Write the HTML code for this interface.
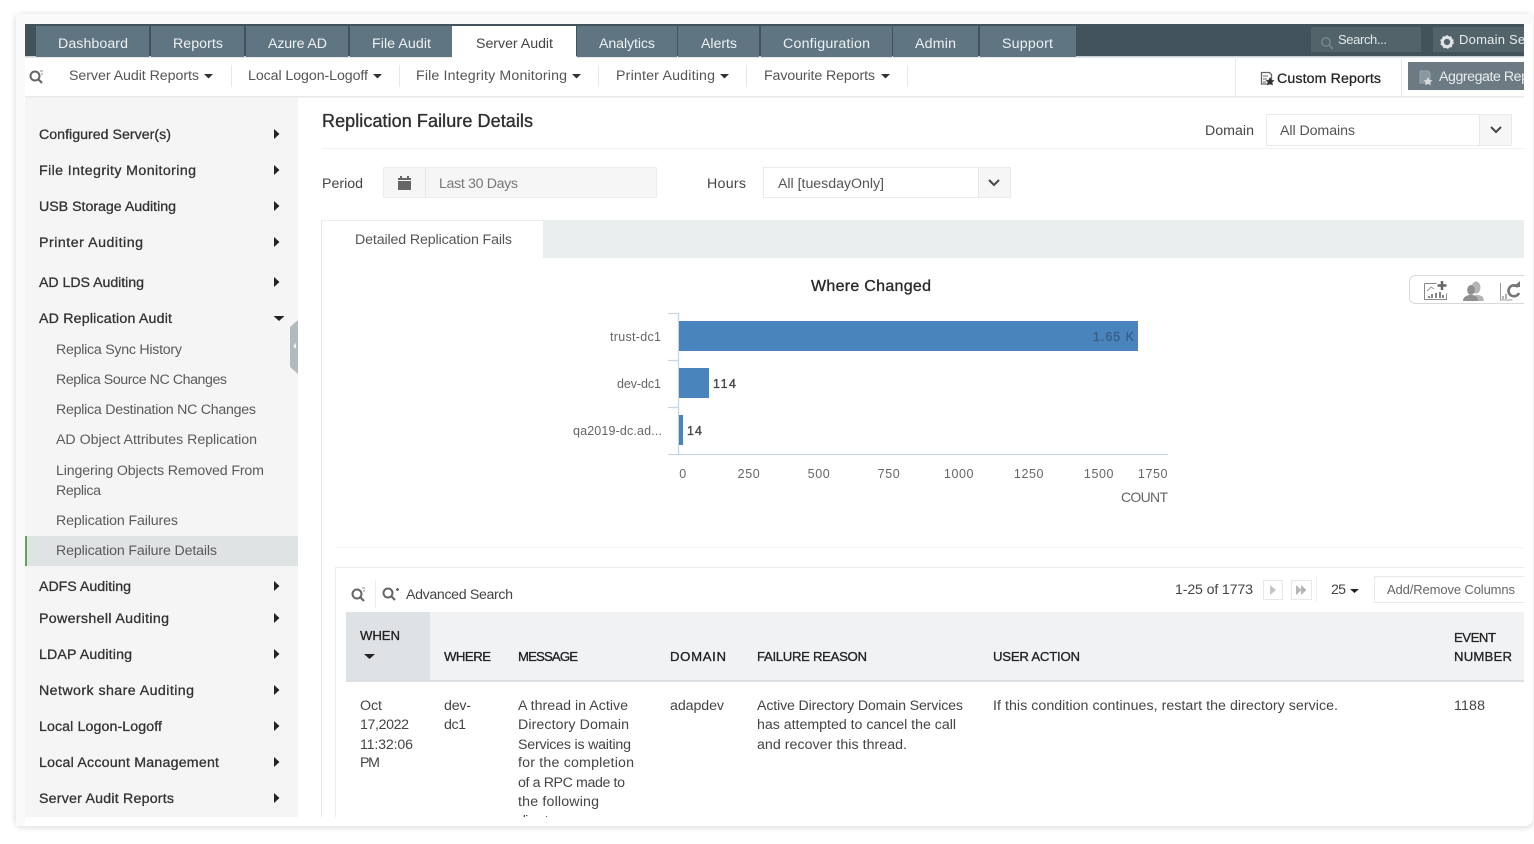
<!DOCTYPE html>
<html><head><meta charset="utf-8"><title>Replication Failure Details</title>
<style>
html,body{margin:0;padding:0;width:1534px;height:844px;overflow:hidden;background:#fff}
svg{display:block;position:absolute;left:0;top:0}
text{font-family:"Liberation Sans",sans-serif;font-size:14.2px;fill:#555}
.tab text{fill:#eef1f2}
.s{stroke:currentColor;stroke-width:.35px}
.b text{fill:#333;stroke:#333;stroke-width:.3px}
.u text{fill:#5a5a5a}
.h text{fill:#222;stroke:#222;stroke-width:.3px;font-size:13.2px}
.r text{fill:#444}
.c text{fill:#666;font-size:12.5px;letter-spacing:.6px}
.l text{fill:#666;font-size:12.5px}
</style></head><body>
<svg width="1534" height="844" viewBox="0 0 1534 844" xmlns="http://www.w3.org/2000/svg">
<defs>
<clipPath id="app"><rect x="25" y="24" width="1499" height="793"/></clipPath>
<filter id="sh" x="-2%" y="-3%" width="104%" height="106%"><feGaussianBlur stdDeviation="2.500"/></filter>
<filter id="soft" x="0" y="0" width="100%" height="100%"><feGaussianBlur stdDeviation="0.35"/></filter>
</defs>
<rect x="14" y="13" width="1520" height="816" rx="9" fill="#e6e6e6" filter="url(#sh)"/>
<rect x="16" y="14" width="1517" height="812" rx="8" fill="#fff"/>
<rect x="16" y="14" width="9" height="812" fill="#fafafa"/>
<rect x="16" y="14" width="1517" height="10" rx="4" fill="#fafafa"/>
<g clip-path="url(#app)" filter="url(#soft)">
<!-- top bar -->
<rect x="25" y="24" width="1499" height="33" fill="#43535b"/>
<rect x="25" y="56" width="1499" height="1.5" fill="#c8d0d4"/>
<g fill="#5f7481">
<rect x="36" y="26" width="113" height="31"/><rect x="151" y="26" width="93" height="31"/><rect x="246" y="26" width="102" height="31"/><rect x="350" y="26" width="102" height="31"/><rect x="577" y="26" width="100" height="31"/><rect x="678" y="26" width="81" height="31"/><rect x="761" y="26" width="131" height="31"/><rect x="893" y="26" width="85" height="31"/><rect x="980" y="26" width="96" height="31"/>
</g>
<rect x="452" y="26" width="124" height="32" fill="#fff"/>
<g class="tab">
<text x="58" y="48" textLength="70">Dashboard</text>
<text x="173" y="48" textLength="50">Reports</text>
<text x="268" y="48" textLength="59">Azure AD</text>
<text x="372" y="48" textLength="59">File Audit</text>
<text x="599" y="48" textLength="56">Analytics</text>
<text x="701" y="48" textLength="36">Alerts</text>
<text x="783" y="48" textLength="87">Configuration</text>
<text x="915" y="48" textLength="41">Admin</text>
<text x="1002" y="48" textLength="51">Support</text>
</g>
<text x="476" y="48" textLength="77" style="fill:#444">Server Audit</text>
<rect x="1311" y="27" width="110" height="25" fill="#53636b"/>
<rect x="1433" y="27" width="91" height="25" fill="#53636b"/>
<circle cx="1326" cy="42" r="4.200" fill="none" stroke="#75848b" stroke-width="1.600"/><path d="M1329 45l4 4" stroke="#75848b" stroke-width="1.800"/>
<text x="1338" y="44" textLength="49" style="fill:#e3e7e9;font-size:13px">Search...</text>
<circle cx="1447" cy="42" r="4.600" fill="none" stroke="#dfe3e5" stroke-width="3"/>
<circle cx="1447" cy="42" r="6.200" fill="none" stroke="#dfe3e5" stroke-width="1.200" stroke-dasharray="2 2"/>
<text x="1459" y="44" textLength="70" style="fill:#e8ecee;font-size:13px">Domain Set</text>
<!-- subnav -->
<rect x="25" y="96" width="1499" height="1.5" fill="#e9e9e9"/>
<circle cx="35" cy="76" r="4.500" fill="none" stroke="#666" stroke-width="2"/><path d="M38 79l4 4" stroke="#666" stroke-width="2.200"/><path d="M40 71h3M41 74h2" stroke="#888"/>
<text x="69" y="80" textLength="130">Server Audit Reports</text>
<text x="248" y="80" textLength="120">Local Logon-Logoff</text>
<text x="416" y="80" textLength="151">File Integrity Monitoring</text>
<text x="616" y="80" textLength="99">Printer Auditing</text>
<text x="764" y="80" textLength="111">Favourite Reports</text>
<g fill="#333">
<path d="M204 74h9l-4.500 4.500z"/><path d="M373 74h9l-4.500 4.500z"/><path d="M572 74h9l-4.500 4.500z"/><path d="M720 74h9l-4.500 4.500z"/><path d="M881 74h9l-4.500 4.500z"/>
</g>
<g stroke="#e6e8e9" stroke-width="1">
<path d="M231.500 65v22M399.500 65v22M598.500 65v22M746.500 65v22M907.500 65v22M1235.500 59v37M1401.500 59v37"/>
</g>
<path d="M1261.500 72.500h8l2 2v9.500h-10z" fill="#fff" stroke="#666" stroke-width="1.300"/><path d="M1263 76h5M1263 79h4M1263 82h3" stroke="#666"/><path d="M1270 77l1.500 3 3 .4-2.200 2 .6 3-2.900-1.500-2.900 1.500.6-3-2.200-2 3-.4z" fill="#333"/>
<g class="b"><text x="1277" y="83" textLength="104" style="fill:#222">Custom Reports</text></g>
<rect x="1408" y="62" width="116" height="28" fill="#6c7a83"/>
<path d="M1420 71h8l2 2v10h-10z" fill="#8b979e" stroke="#9aa5ab"/><path d="M1428 77l1.500 3 3 .4-2.200 2 .6 3-2.900-1.500-2.900 1.500.6-3-2.200-2 3-.4z" fill="#d8dcdf"/>
<text x="1439" y="81" textLength="90" style="fill:#e9ecee">Aggregate Rep</text>
<!-- sidebar -->
<rect x="25" y="97.500" width="273" height="720" fill="#f5f5f5"/>
<rect x="25" y="536" width="273" height="30" fill="#dfe3e4"/>
<rect x="25" y="536" width="2" height="30" fill="#63a35c"/>
<path d="M298 320v54l-8-7v-40z" fill="#b3babe"/><path d="M296 343v6l-3-3z" fill="#eef0f1"/>
<g class="b">
<text x="39" y="139" textLength="132">Configured Server(s)</text>
<text x="39" y="175" textLength="157">File Integrity Monitoring</text>
<text x="39" y="211" textLength="137">USB Storage Auditing</text>
<text x="39" y="247" textLength="104">Printer Auditing</text>
<text x="39" y="287" textLength="105">AD LDS Auditing</text>
<text x="39" y="323" textLength="133">AD Replication Audit</text>
<text x="39" y="591" textLength="92">ADFS Auditing</text>
<text x="39" y="623" textLength="130">Powershell Auditing</text>
<text x="39" y="659" textLength="93">LDAP Auditing</text>
<text x="39" y="695" textLength="155">Network share Auditing</text>
<text x="39" y="731" textLength="123">Local Logon-Logoff</text>
<text x="39" y="767" textLength="180">Local Account Management</text>
<text x="39" y="803" textLength="135">Server Audit Reports</text>
</g>
<g class="u">
<text x="56" y="354" textLength="126">Replica Sync History</text>
<text x="56" y="384" textLength="171">Replica Source NC Changes</text>
<text x="56" y="414" textLength="200">Replica Destination NC Changes</text>
<text x="56" y="444" textLength="201">AD Object Attributes Replication</text>
<text x="56" y="475" textLength="208">Lingering Objects Removed From</text>
<text x="56" y="495" textLength="45">Replica</text>
<text x="56" y="525" textLength="122">Replication Failures</text>
<text x="56" y="555" textLength="161">Replication Failure Details</text>
</g>
<g fill="#222">
<path d="M274 129l5.500 5-5.500 5zM274 165l5.500 5-5.500 5zM274 201l5.500 5-5.500 5zM274 237l5.500 5-5.500 5zM274 277l5.500 5-5.500 5zM274 581l5.500 5-5.500 5zM274 613l5.500 5-5.500 5zM274 649l5.500 5-5.500 5zM274 685l5.500 5-5.500 5zM274 721l5.500 5-5.500 5zM274 757l5.500 5-5.500 5zM274 793l5.500 5-5.500 5z"/>
<path d="M273.500 316h11l-5.500 5z"/>
</g>
<!-- main -->
<rect x="321" y="220" width="1" height="597" fill="#e6e8e9"/>
<text x="322" y="127" textLength="211" class="s" style="font-size:18px;fill:#2f2f2f;color:#2f2f2f">Replication Failure Details</text>
<rect x="322" y="148" width="1202" height="1" fill="#f2f2f2"/>
<text x="1205" y="135" textLength="49" style="fill:#444">Domain</text>
<rect x="1266.500" y="114.500" width="245" height="31" fill="#fff" stroke="#eaeaea"/>
<rect x="1480" y="115" width="31" height="30" fill="#f6f6f6"/><rect x="1479" y="115" width="1" height="30" fill="#e8e8e8"/>
<path d="M1491 127l5 5 5-5" fill="none" stroke="#444" stroke-width="2"/>
<text x="1280" y="135" textLength="75">All Domains</text>
<text x="322" y="188" textLength="41" style="fill:#444">Period</text>
<rect x="383.500" y="167.500" width="273" height="30" fill="#f6f6f6" stroke="#eeeeee"/>
<rect x="425" y="168" width="1" height="30" fill="#e7e7e7"/>
<rect x="398" y="178" width="13" height="12" fill="#666"/><path d="M398 180.500h13" stroke="#f6f6f6"/><path d="M401 176v3M408 176v3" stroke="#666" stroke-width="2"/>
<text x="439" y="188" textLength="79" style="fill:#777">Last 30 Days</text>
<text x="707" y="188" textLength="39" style="fill:#444">Hours</text>
<rect x="763.500" y="167.500" width="247" height="30" fill="#fff" stroke="#eaeaea"/>
<rect x="979" y="168" width="31" height="29" fill="#f6f6f6"/><rect x="978" y="168" width="1" height="29" fill="#e8e8e8"/>
<path d="M989 180l5 5 5-5" fill="none" stroke="#444" stroke-width="2"/>
<text x="778" y="188" textLength="106">All [tuesdayOnly]</text>
<rect x="322" y="220" width="1202" height="38" fill="#ebeeef"/>
<rect x="322" y="221" width="221" height="37" fill="#fff"/>
<text x="355" y="244" textLength="157">Detailed Replication Fails</text>
<!-- chart -->
<text x="811" y="291" textLength="120" class="s" style="font-size:16px;fill:#2a2a2a;color:#2a2a2a">Where Changed</text>
<rect x="1409.500" y="275.500" width="130" height="28" rx="6" fill="#fff" stroke="#d8d8d8"/>
<g>
<path d="M1424.500 283.500h12M1424.500 283.500v16h22v-6" fill="none" stroke="#888"/>
<path d="M1427 291l4-4 3 2" fill="none" stroke="#999"/>
<path d="M1429 298v-2M1432 298v-4M1436 298v-5M1440 298v-6M1443 298v-3" stroke="#777" stroke-width="1.800"/>
<path d="M1442 281v9M1437.500 285.500h9" stroke="#666" stroke-width="2.500"/>
<ellipse cx="1476" cy="287.500" rx="4.500" ry="6" fill="#b5b5b5"/>
<path d="M1474 301v-5c2-2 6-1 9 1l1 4z" fill="#b5b5b5"/>
<ellipse cx="1471" cy="290" rx="3.800" ry="5" fill="#8f8f8f"/>
<path d="M1463 301c0-4 3-5 6-6h4c3 1 5 2 5 6z" fill="#8f8f8f"/>
<path d="M1500.500 283v17h12" fill="none" stroke="#999"/>
<path d="M1503 299v-3M1506 299v-5" stroke="#999" stroke-width="1.500"/>
<path d="M1518 287a5.500 5.500 0 1 0 1 6" fill="none" stroke="#777" stroke-width="2.600"/><path d="M1513 287h7v-6z" fill="#777"/>
</g>
<g fill="none" stroke="#c7d6e4" stroke-width="1.300">
<path d="M678.500 313v141M668 313.500h10M668 360.500h10M668 407.500h10M668 454.500h500"/>
</g>
<rect x="679" y="321" width="459" height="30" fill="#4a84bc"/>
<rect x="679" y="368" width="30" height="30" fill="#4a84bc"/>
<rect x="679" y="415" width="4" height="30" fill="#4a84bc"/>
<g class="l">
<text x="610" y="341" textLength="51">trust-dc1</text>
<text x="617" y="388" textLength="44">dev-dc1</text>
<text x="573" y="435" textLength="89">qa2019-dc.ad...</text>
</g>
<g class="c">
<text x="683" y="478" text-anchor="middle">0</text>
<text x="749" y="478" text-anchor="middle">250</text>
<text x="819" y="478" text-anchor="middle">500</text>
<text x="889" y="478" text-anchor="middle">750</text>
<text x="959" y="478" text-anchor="middle">1000</text>
<text x="1029" y="478" text-anchor="middle">1250</text>
<text x="1099" y="478" text-anchor="middle">1500</text>
<text x="1153" y="478" text-anchor="middle">1750</text>
</g>
<text x="1093" y="341" textLength="41" class="s" style="font-size:12.500px;fill:#37608a;color:#37608a">1.65 K</text>
<text x="713" y="388" textLength="23" class="s" style="font-size:12.500px;fill:#444;color:#444">114</text>
<text x="687" y="435" textLength="15" class="s" style="font-size:12.500px;fill:#444;color:#444">14</text>
<text x="1121" y="502" textLength="47" style="fill:#666;font-size:14px">COUNT</text>
<!-- grid -->
<rect x="335" y="547" width="1189" height="1" fill="#f5f5f5"/>
<rect x="335" y="567" width="1189" height="1" fill="#ececec"/>
<rect x="335" y="567" width="1" height="250" fill="#ececec"/>
<circle cx="357" cy="594" r="4.500" fill="none" stroke="#666" stroke-width="2"/><path d="M360 597l4 4" stroke="#666" stroke-width="2.200"/><path d="M362 588h3M363 591h2" stroke="#888"/>
<rect x="375" y="580" width="1" height="28" fill="#eceded"/>
<circle cx="388" cy="593" r="4.500" fill="none" stroke="#666" stroke-width="2"/><path d="M391 596l4 4" stroke="#666" stroke-width="2.200"/><path d="M396 589.500h3M397.500 588v3" stroke="#666" stroke-width="1.500"/>
<text x="406" y="599" textLength="107" style="fill:#444">Advanced Search</text>
<text x="1175" y="594" textLength="78" style="fill:#444">1-25 of 1773</text>
<rect x="1263.500" y="580.500" width="19" height="19" fill="#fff" stroke="#e8e8e8"/><path d="M1270 585l6 5-6 5z" fill="#c4c4c4"/>
<rect x="1291.500" y="580.500" width="20" height="19" fill="#fff" stroke="#e8e8e8"/><path d="M1296 585l5.500 5-5.500 5zM1301 585l5.500 5-5.500 5z" fill="#b5b5b5"/>
<rect x="1316" y="576" width="1" height="26" fill="#eeeeee"/>
<text x="1331" y="594" textLength="15" style="fill:#444">25</text>
<path d="M1350 589h9l-4.500 4z" fill="#222"/>
<path d="M1524 576.500h-149.500v26H1524" fill="none" stroke="#e8e8e8"/>
<text x="1387" y="594" textLength="128" style="font-size:13px;fill:#666">Add/Remove Columns</text>
<rect x="346" y="612" width="1178" height="70" fill="#f1f2f4"/>
<rect x="346" y="612" width="84" height="70" fill="#dfe2e4"/>
<rect x="346" y="680" width="1178" height="2" fill="#dcdfe1"/>
<g class="h">
<text x="360" y="640" textLength="40">WHEN</text>
<text x="444" y="661" textLength="47">WHERE</text>
<text x="518" y="661" textLength="60">MESSAGE</text>
<text x="670" y="661" textLength="56">DOMAIN</text>
<text x="757" y="661" textLength="110">FAILURE REASON</text>
<text x="993" y="661" textLength="87">USER ACTION</text>
<text x="1454" y="642" textLength="42">EVENT</text>
<text x="1454" y="661" textLength="58">NUMBER</text>
</g>
<path d="M364 654h11l-5.500 5z" fill="#222"/>
<g class="r">
<text x="360" y="710" textLength="22">Oct</text>
<text x="360" y="729" textLength="49">17,2022</text>
<text x="360" y="749" textLength="53">11:32:06</text>
<text x="360" y="767" textLength="20">PM</text>
<text x="444" y="710" textLength="27">dev-</text>
<text x="444" y="729" textLength="22">dc1</text>
<text x="518" y="710" textLength="110">A thread in Active</text>
<text x="518" y="729" textLength="111">Directory Domain</text>
<text x="518" y="749" textLength="113">Services is waiting</text>
<text x="518" y="767" textLength="116">for the completion</text>
<text x="518" y="787" textLength="107">of a RPC made to</text>
<text x="518" y="806" textLength="81">the following</text>
<text x="518" y="825" textLength="92">directory servers</text>
<text x="670" y="710" textLength="54">adapdev</text>
<text x="757" y="710" textLength="206">Active Directory Domain Services</text>
<text x="757" y="729" textLength="199">has attempted to cancel the call</text>
<text x="757" y="749" textLength="150">and recover this thread.</text>
<text x="993" y="710" textLength="345">If this condition continues, restart the directory service.</text>
<text x="1454" y="710" textLength="31">1188</text>
</g>
</g>
</svg>
</body></html>
